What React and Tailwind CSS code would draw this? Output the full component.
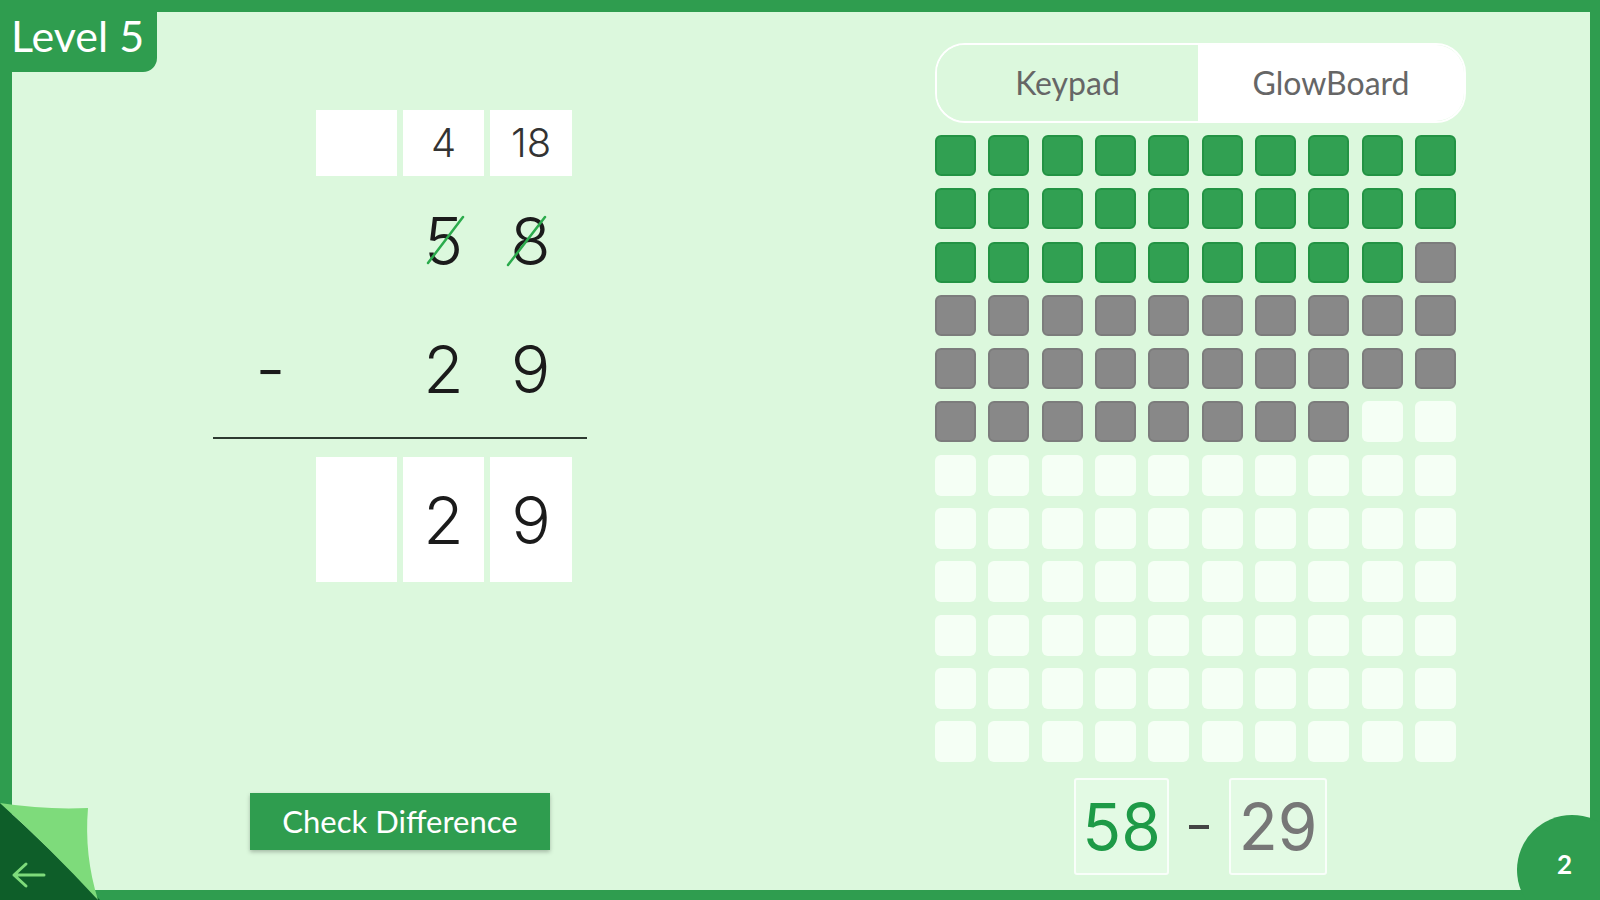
import React from 'react'

const GREEN = 'bg-[#2f9d4f]'

// 58 dots on the board: 29 left (green), 29 taken away (gray)
const cells = Array.from({ length: 120 }, (_, i) =>
  i < 29 ? 'green' : i < 58 ? 'gray' : 'empty'
)

const cellClass = {
  green: 'bg-[#31a052] border-2 border-[#239344]',
  gray: 'bg-[#888888] border-2 border-[#7c7c7c]',
  empty: 'bg-[#f5fff5]',
}

function Strike({ x1, y1, x2, y2 }) {
  return (
    <svg className="absolute inset-0 pointer-events-none" width="81" height="66" viewBox="0 0 81 66">
      <line x1={x1} y1={y1} x2={x2} y2={y2} stroke="#2bab4c" strokeWidth="2.5" strokeLinecap="round" />
    </svg>
  )
}

function DigitRow({ sign, digits, strikes }) {
  return (
    <div className="flex h-[66px] items-center leading-none text-[66px] font-light text-[#1b1b1b]">
      <div className="w-[103px] pl-[12px] text-center">{sign}</div>
      <div className="flex gap-[6px]">
        <div className="w-[81px]" />
        {digits.map((d, i) => (
          <div key={i} className="relative w-[81px] text-center">
            {d}
            {strikes && <Strike {...strikes[i]} />}
          </div>
        ))}
      </div>
    </div>
  )
}

export default function App() {
  return (
    <div className={`relative w-[1600px] h-[900px] overflow-hidden ${GREEN} pt-[12px] pl-[12px] pr-[10px] pb-[10px] font-['Lato',sans-serif]`}>
      <div className="relative flex h-full bg-[#dcf8dd]">
        {/* Left: column subtraction */}
        <div className="ml-[201px] flex w-[374px] flex-col font-['Inter',sans-serif]">
          {/* borrow row */}
          <div className="mt-[98px] flex h-[66px]">
            <div className="w-[103px]" />
            <div className="flex gap-[6px]">
              <div className="w-[81px] bg-white" />
              <div className="flex w-[81px] items-center justify-center bg-white text-[40px] font-light text-[#333]">4</div>
              <div className="flex w-[82px] items-center justify-center bg-white text-[40px] font-light text-[#333]">18</div>
            </div>
          </div>

          <div className="mt-[32px]">
            <DigitRow
              sign=""
              digits={['5', '8']}
              strikes={[
                { x1: 25, y1: 55, x2: 60, y2: 9 },
                { x1: 18, y1: 57, x2: 55, y2: 9 },
              ]}
            />
          </div>

          <div className="mt-[62px]">
            <DigitRow sign="-" digits={['2', '9']} />
          </div>

          <div className="mt-[35px] h-[2px] bg-[#2d3a30]" />

          {/* answer boxes */}
          <div className="mt-[18px] flex h-[125px]">
            <div className="w-[103px]" />
            <div className="flex gap-[6px] text-[66px] font-light leading-none text-[#1b1b1b]">
              <div className="w-[81px] bg-white" />
              <div className="flex w-[81px] items-center justify-center bg-white">2</div>
              <div className="flex w-[82px] items-center justify-center bg-white">9</div>
            </div>
          </div>

          <button className={`mx-auto mt-auto mb-[40px] h-[57px] w-[300px] ${GREEN} font-['Lato',sans-serif] text-[31px] text-white shadow-[0_2px_4px_rgba(0,0,0,0.25)]`}>
            Check Difference
          </button>
        </div>

        {/* Right: keypad / glowboard */}
        <div className="ml-[348px] flex w-[531px] flex-col pt-[31px]">
          <div className="flex h-[80px] overflow-hidden rounded-[30px] border-2 border-white text-[32px] text-[#666]">
            <div className="flex w-[261px] items-center justify-center bg-[#dcf8dd]">Keypad</div>
            <div className="flex flex-1 items-center justify-center bg-white">GlowBoard</div>
          </div>

          <div className="mt-[12px] grid w-[521px] grid-cols-10 gap-[12.3px]">
            {cells.map((c, i) => (
              <div key={i} className={`h-[41px] w-[41px] rounded-[6px] ${cellClass[c]}`} />
            ))}
          </div>

          <div className="mt-[16px] flex items-center justify-center font-['Inter',sans-serif] text-[64px] leading-none">
            <div className="flex h-[97px] w-[95px] items-center justify-center rounded-[3px] border-2 border-white/80 bg-[#e3fae4] text-[#1e9a47]">
              58
            </div>
            <div className="mx-[20px] h-[4px] w-[20px] bg-[#444]" />
            <div className="flex h-[97px] w-[98px] items-center justify-center rounded-[3px] border-2 border-white/80 bg-[#e3fae4] text-[#777]">
              29
            </div>
          </div>
        </div>
      </div>

      {/* Level badge */}
      <div className={`absolute left-0 top-0 flex h-[72px] w-[157px] items-center rounded-br-[14px] ${GREEN} pl-[11px] text-[43px] text-white`}>
        Level 5
      </div>

      {/* Page curl back button */}
      <svg className="absolute bottom-0 left-0" width="100" height="100" viewBox="0 0 100 100">
        <path d="M0,3 Q50,48 100,100 L0,100 Z" fill="#0e5e29" />
        <path d="M0,3 Q45,10 88,8 Q84,55 98,100 Q50,48 0,3 Z" fill="#7edb7b" />
        <path d="M44,75 L14,75 M26,64 L14,75 L26,86" stroke="#7edb7b" strokeWidth="3" fill="none" strokeLinecap="round" strokeLinejoin="round" />
      </svg>

      {/* Page number */}
      <div className={`absolute left-[1517px] top-[815px] h-[110px] w-[110px] rounded-full ${GREEN} pl-[40px] pt-[32px] text-[26px] font-bold leading-[34px] text-white`}>
        2
      </div>
    </div>
  )
}
